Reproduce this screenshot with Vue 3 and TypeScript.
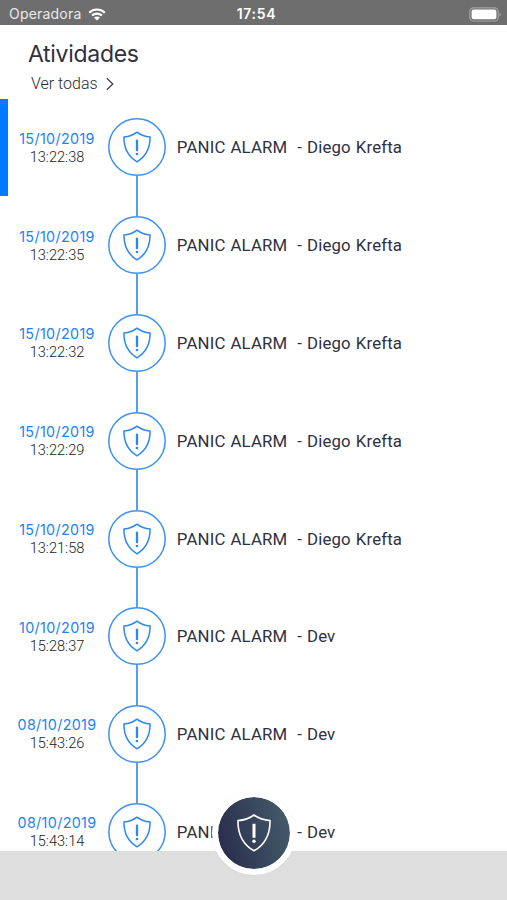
<script setup lang="ts">
interface Activity {
  date: string
  time: string
  person: string
}

const activities: Activity[] = [
  { date: '15/10/2019', time: '13:22:38', person: 'Diego Krefta' },
  { date: '15/10/2019', time: '13:22:35', person: 'Diego Krefta' },
  { date: '15/10/2019', time: '13:22:32', person: 'Diego Krefta' },
  { date: '15/10/2019', time: '13:22:29', person: 'Diego Krefta' },
  { date: '15/10/2019', time: '13:21:58', person: 'Diego Krefta' },
  { date: '10/10/2019', time: '15:28:37', person: 'Dev' },
  { date: '08/10/2019', time: '15:43:26', person: 'Dev' },
  { date: '08/10/2019', time: '15:43:14', person: 'Dev' },
]
</script>

<template>
  <main class="screen">
    <header class="status">
      <div class="carrier">
        <span>Operadora</span>
        <svg class="wifi" viewBox="0 0 18 13" fill="none">
          <path d="M1.2 4.7C5.5.5 12.5.5 16.8 4.7M4 7.6c2.8-2.7 7.2-2.7 10 0" stroke="#fff" stroke-width="2.1" />
          <path d="M9 12.5 5.9 9.5c1.7-1.5 4.5-1.5 6.2 0Z" fill="#fff" />
        </svg>
      </div>
      <span class="clock">17:54</span>
      <svg class="battery" viewBox="0 0 33 15" fill="none">
        <rect x="0.8" y="0.8" width="28.4" height="13.2" rx="3.8" stroke="#a4a4a4" stroke-width="1.2" />
        <rect x="2.6" y="2.6" width="24.8" height="9.6" rx="2" fill="#fff" />
        <path d="M30.6 5.2c1.6.7 1.6 3.7 0 4.4Z" fill="#a4a4a4" />
      </svg>
    </header>

    <section class="heading">
      <h1>Atividades</h1>
      <button class="all" type="button">
        <span>Ver todas</span>
        <svg class="chevron" viewBox="0 0 8 14" fill="none">
          <path d="m.8 1.2 6 5.8-6 5.8" stroke="#3c3c40" stroke-width="1.2" />
        </svg>
      </button>
    </section>

    <ul class="timeline">
      <li v-for="item in activities" :key="item.date + item.time" class="row">
        <div class="when">
          <span class="date">{{ item.date }}</span>
          <span class="time">{{ item.time }}</span>
        </div>
        <div class="track">
          <i class="line"></i>
          <svg class="node" viewBox="0 0 58 58" fill="none">
            <circle cx="29" cy="29" r="28.2" stroke="#3e92f2" stroke-width="1.5" />
            <g transform="translate(15 13)">
              <path d="M14 1.2C10.6 3.9 6 5.7.9 6.1.9 17 4.4 25.3 14 30.8c9.6-5.5 13.1-13.8 13.1-24.7C22 5.7 17.4 3.9 14 1.2Z" stroke="currentColor" stroke-width="1.5" stroke-linejoin="round" />
              <path d="M14 9.6v9.6" stroke="currentColor" stroke-width="2.3" stroke-linecap="round" />
              <circle cx="14" cy="23" r="1.35" fill="currentColor" />
            </g>
          </svg>
          <i class="line"></i>
        </div>
        <p class="label">PANIC ALARM&nbsp; - {{ item.person }}</p>
      </li>
    </ul>

    <footer class="bar">
      <button class="panic" type="button" aria-label="PANIC ALARM">
        <svg class="panic-shield" viewBox="0 0 34 38" fill="none">
          <path d="M17 1C12.8 4.2 7 6.2 1 6.6.8 19.5 5.4 30.2 17 36.8c11.6-6.6 16.2-17.3 16-30.2C27 6.2 21.2 4.2 17 1Z" stroke="currentColor" stroke-width="1.6" stroke-linejoin="round" />
          <path d="M17 9.8v14" stroke="currentColor" stroke-width="3" />
          <circle cx="17" cy="27.3" r="1.7" fill="currentColor" />
        </svg>
      </button>
    </footer>
  </main>
</template>

<style>
body {
  margin: 0;
  background: #fff;
}
</style>

<style scoped>
.screen {
  display: flex;
  flex-direction: column;
  height: 900px;
  overflow: hidden;
  background: #fff;
  color: #2f3040;
  font-family: Inter, "Liberation Sans", sans-serif;
}

.status {
  display: grid;
  grid-template-columns: 1fr auto 1fr;
  align-items: center;
  flex: none;
  box-sizing: border-box;
  height: 25px;
  padding: 3px 5px 0 9px;
  background: #6e6e6e;
  color: #fff;
  font-size: 14px;
  line-height: 20px;
}

.carrier {
  display: flex;
  align-items: center;
  gap: 7px;
  color: #e9e9e9;
  letter-spacing: 0.2px;
}

.wifi {
  width: 18px;
  height: 13px;
}

.clock {
  padding-left: 2px;
  font-weight: 600;
  letter-spacing: 0.7px;
}

.battery {
  justify-self: end;
  width: 33px;
  height: 15px;
}

.heading {
  display: flex;
  flex: none;
  flex-direction: column;
  align-items: flex-start;
  box-sizing: border-box;
  height: 73.6px;
  padding: 14px 0 0 28px;
}

h1 {
  margin: 0;
  font-size: 23px;
  font-weight: 400;
  letter-spacing: -0.3px;
  line-height: 30px;
}

.all {
  display: flex;
  align-items: center;
  gap: 8px;
  margin: 5px 0 0 3px;
  padding: 0;
  border: 0;
  background: none;
  color: #2c2c30;
  font: 300 16px/20px Roboto, sans-serif;
}

.chevron {
  width: 8px;
  height: 14px;
}

.timeline {
  flex: 1;
  min-height: 0;
  margin: 0;
  padding: 0;
  overflow: hidden;
  list-style: none;
}

.row {
  display: flex;
  align-items: center;
  box-sizing: border-box;
  height: 97.77px;
  border-left: 8px solid transparent;
}

.row:first-child {
  border-left-color: #007aff;
}

.when {
  display: flex;
  flex-direction: column;
  align-items: center;
  width: 98px;
  padding-top: 0.8px;
  line-height: 18px;
}

.date {
  color: #2182f5;
  font-size: 14.3px;
  letter-spacing: 0.35px;
}

.time {
  color: #222;
  font-family: Roboto, sans-serif;
  font-size: 14.6px;
  font-weight: 300;
}

.track {
  display: flex;
  flex-direction: column;
  align-items: center;
  width: 61.6px;
  height: 100%;
}

.line {
  flex: 1;
  width: 1.6px;
  background: #559ff4;
}

.row:first-child .line:first-child {
  background: transparent;
}

.node {
  flex: none;
  width: 58px;
  height: 58px;
  color: #2d88f3;
}

.label {
  margin: 0 0 0 9.2px;
  font: 400 16.8px/22px Roboto, sans-serif;
  letter-spacing: 0.17px;
  word-spacing: 0.6px;
  white-space: nowrap;
}

.bar {
  display: flex;
  justify-content: center;
  flex: none;
  height: 49px;
  background: #dedede;
}

.panic {
  display: flex;
  align-items: center;
  justify-content: center;
  box-sizing: border-box;
  width: 84px;
  height: 84px;
  margin-top: -60px;
  padding: 0;
  border: 6px solid #fff;
  border-radius: 50%;
  background: linear-gradient(75deg, #27294a, #465f6d) padding-box;
  box-shadow: 0 0 2px rgba(0, 0, 0, 0.07);
  color: #fff;
}

.panic-shield {
  width: 34px;
  height: 38px;
}
</style>
